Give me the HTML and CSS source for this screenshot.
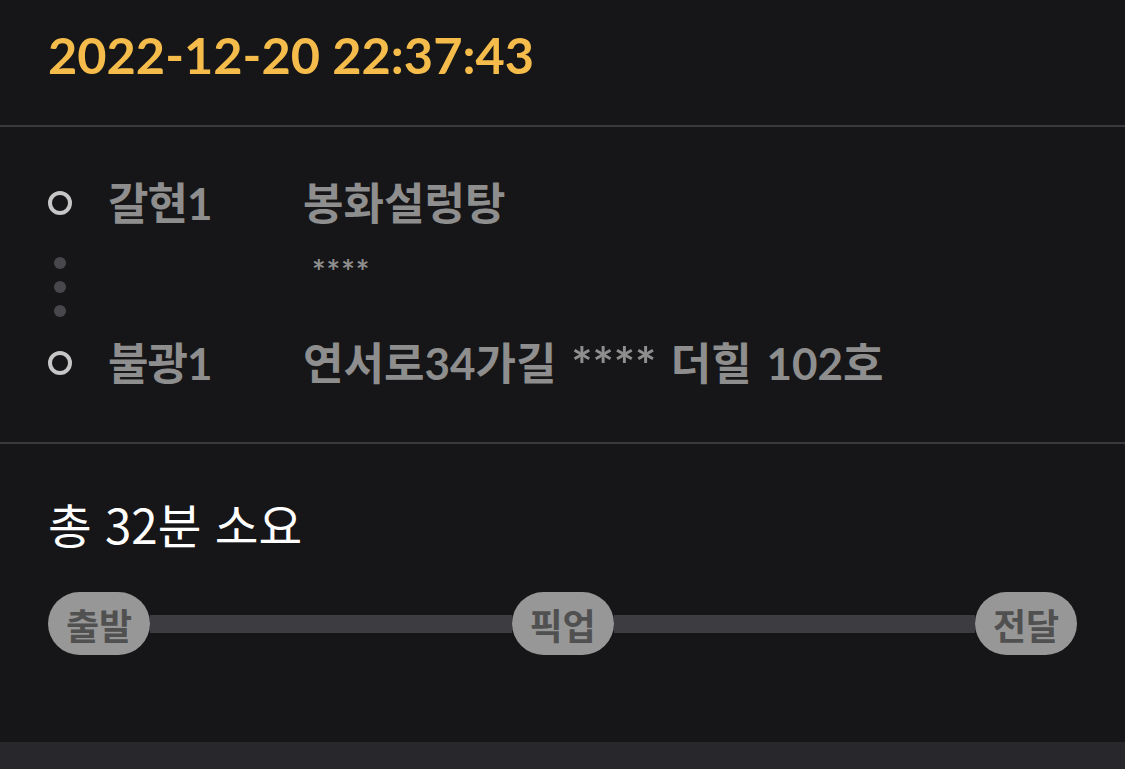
FILE: index.html
```html
<!DOCTYPE html>
<html lang="ko">
<head>
    <meta charset="UTF-8">
    <meta name="viewport" content="width=device-width, initial-scale=1.0">
    <title>배달 상세</title>
    <link rel="stylesheet" href="styles.css">
</head>
<body>
    <div class="page">
        <div class="header">
            <div class="date">2022-12-20 22:37:43</div>
        </div>

        <div class="route">
            <div class="ring"></div>
            <div class="area">갈현1</div>
            <div class="addr">봉화설렁탕</div>

            <div class="dots">
                <span></span>
                <span></span>
                <span></span>
            </div>
            <div></div>
            <div class="addr-sub">****</div>

            <div class="ring"></div>
            <div class="area">불광1</div>
            <div class="addr">연서로34가길 <span class="mask">****</span> 더힐 102호</div>
        </div>

        <div class="summary">
            <div class="total">총 32분 소요</div>
            <div class="progress">
                <div class="step">출발</div>
                <div class="track"></div>
                <div class="step">픽업</div>
                <div class="track"></div>
                <div class="step">전달</div>
            </div>
        </div>

        <div class="bottom-bar"></div>
    </div>
</body>
</html>
```

FILE: styles.css
```css
* {
    box-sizing: border-box;
}
html, body {
    margin: 0;
    padding: 0;
    background: #161618;
}
body {
    font-family: Lato, "Noto Sans CJK KR", sans-serif;
    color: #fff;
}
.page {
    width: 1125px;
    height: 769px;
    display: flex;
    flex-direction: column;
}
.header {
    height: 127px;
    padding: 0 48px;
    display: flex;
    align-items: center;
    border-bottom: 2px solid #3a393e;
}
.date {
    font-size: 50.5px;
    font-weight: 700;
    color: #f5bc4b;
    margin-top: -16px;
}
.route {
    display: grid;
    grid-template-columns: 60px 195px 1fr;
    padding: 52px 48px 55px;
    border-bottom: 2px solid #3a393e;
    align-items: center;
}
.ring {
    width: 24px;
    height: 24px;
    border: 4px solid #c6c6c6;
    border-radius: 50%;
}
.area, .addr {
    font-size: 44px;
    font-weight: 700;
    color: #8e8e8e;
    line-height: 48px;
    white-space: nowrap;
}
.area {
    letter-spacing: -1px;
}
.addr {
    word-spacing: 4px;
}
.mask {
    font-size: 50px;
    line-height: 0;
    letter-spacing: 0;
    vertical-align: -4px;
}
.dots {
    display: flex;
    flex-direction: column;
    gap: 12px;
    padding: 30px 0 22px 6px;
}
.dots span {
    width: 12px;
    height: 12px;
    border-radius: 50%;
    background: #48474c;
}
.addr-sub {
    align-self: start;
    margin-top: 30px;
    padding-left: 9px;
    font-size: 32px;
    font-weight: 700;
    line-height: 30px;
    color: #8e8e8e;
    letter-spacing: 1px;
}
.summary {
    flex: 1;
    padding: 56px 48px 0;
}
.total {
    font-size: 47.5px;
    line-height: 48px;
    font-weight: 400;
    font-family: "Noto Sans CJK KR", sans-serif;
}
.progress {
    display: flex;
    align-items: center;
    margin-top: 44px;
}
.step {
    width: 102px;
    height: 63px;
    border-radius: 32px;
    background: #979797;
    color: #505050;
    font-size: 36px;
    font-weight: 700;
    display: flex;
    align-items: center;
    justify-content: center;
}
.track {
    flex: 1;
    height: 18px;
    background: #3d3c41;
}
.bottom-bar {
    height: 27px;
    background: #28272c;
}
```
